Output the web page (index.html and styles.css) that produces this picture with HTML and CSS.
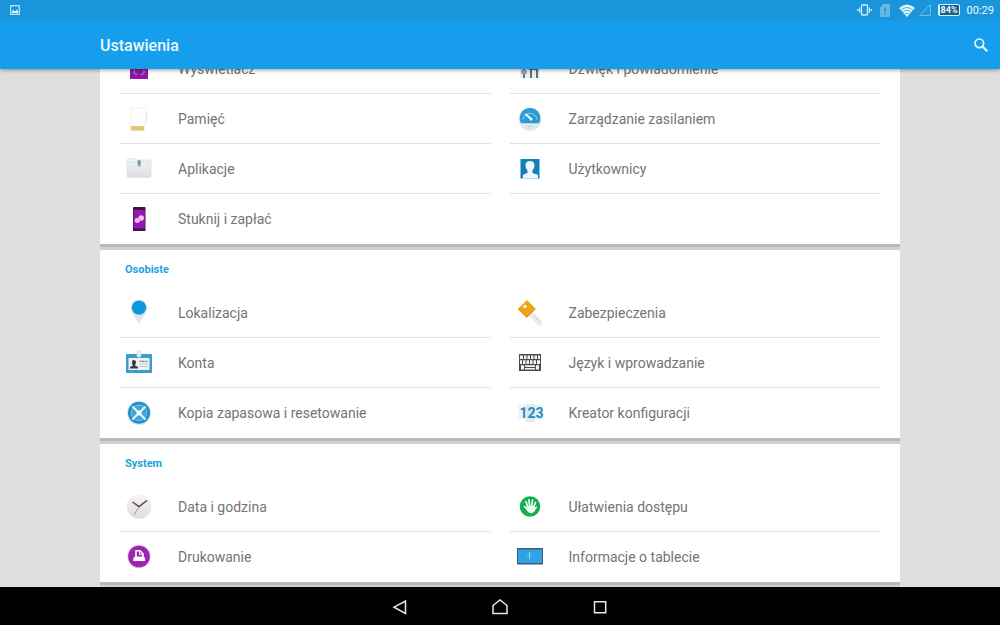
FILE: index.html
```html
<!DOCTYPE html>
<html lang="pl">
<head>
<meta charset="utf-8">
<meta name="viewport" content="width=device-width, initial-scale=1">
<title>Ustawienia</title>
<link rel="stylesheet" href="styles.css">
</head>
<body>
<div class="screen">
  <header class="top">
    <div class="status">
      <svg class="status-pic" width="10" height="10" viewBox="0 0 10 10"><rect x=".7" y=".7" width="8.6" height="8.6" fill="none" stroke="#c4eafa" stroke-width="1.2"/><path d="M2 8V6.500L3.500 5L5 6.500L7 4.500L8 6V8Z" fill="#e2f6fd"/></svg>
      <div class="status-right">
        <svg width="15" height="12" viewBox="0 0 15 12" fill="none" stroke="#c9effb" stroke-width="1.300"><rect x="4.500" y="1" width="6" height="10" rx=".8"/><path d="M2.600 3.500V8.500M12.400 3.500V8.500M.7 5V7M14.300 5V7"/></svg>
        <svg class="sim" width="10" height="13" viewBox="0 0 10 13"><path d="M3.500 0H8.800Q10 0 10 1.200V11.800Q10 13 8.800 13H1.200Q0 13 0 11.800V3.500Z" fill="#62bae9"/><path d="M5 3.500V7.500M5 9V10.500" stroke="#2087c4" stroke-width="1.400"/></svg>
        <svg class="wifi" width="16" height="13" viewBox="0 0 16 13"><path d="M0 4Q8-3.200 16 4L8 13Z" fill="#def7fd"/><path d="M1.800 6.200Q8 .8 14.200 6.200M3.600 8.200Q8 4.500 12.400 8.200M5.400 10.300Q8 8 10.600 10.300" fill="none" stroke="#2a9fde" stroke-width=".8"/></svg>
        <svg width="12" height="12" viewBox="0 0 12 12"><path d="M11.300 .8V11.400H.8Z" fill="none" stroke="#6fc3ee"/></svg>
        <span class="battery">84%</span>
        <time>00:29</time>
      </div>
    </div>
    <div class="appbar">
      <h1>Ustawienia</h1>
      <button class="search" type="button" aria-label="Szukaj"><svg width="16" height="16" viewBox="0 0 16 16" fill="none" stroke="#e6faff"><circle cx="6.300" cy="6.300" r="4.300" stroke-width="1.700"/><path d="M9.500 9.500L14.200 14.200" stroke-width="2.200"/></svg></button>
    </div>
  </header>

  <main class="content">
    <section class="card">
      <ul class="grid">
        <li><a href="#"><svg class="icon" viewBox="0 0 28 28"><rect x="5" y="4" width="18" height="20" fill="#8d16a5"/><path d="M9 15V18Q10 19.500 12 19.500M19 15V18Q18 19.500 16 19.500" fill="none" stroke="#d492df"/></svg>Wyświetlacz</a></li>
        <li><a href="#"><svg class="icon" viewBox="0 0 28 28"><rect x="4" y="4" width="20" height="19" fill="#e9edf0"/><path d="M8 4V23M15 4V23M21 4V23" stroke="#596f82" stroke-width="2"/><circle cx="8" cy="17" r="2.800" fill="#8a9fad"/><rect x="13" y="9" width="9" height="6" fill="#596f82"/></svg>Dźwięk i powiadomienie</a></li>
        <li><a href="#"><svg class="icon" viewBox="0 0 28 28"><path d="M6 2.500H21.500V16L20 19V26H6Z" fill="#fdfdfd" stroke="#f1f1f1"/><path d="M21.500 9V16L19.500 18.500" fill="none" stroke="#e2e2e2"/><path d="M6 21H19V25.500H6Z" fill="#e6cb78"/><path d="M8.500 22V25M11 22V25M13.500 22V25M16 22V25" stroke="#d8b865" stroke-width=".8"/></svg>Pamięć</a></li>
        <li><a href="#"><svg class="icon" viewBox="0 0 28 28"><circle cx="14" cy="14.300" r="11.500" fill="#e5e8ea"/><path d="M5 18.300A10.300 10.300 0 1 1 23 18.300Z" fill="#2b9cd8"/><path d="M6.800 14.500A7.300 7.300 0 0 1 21.200 14.500" fill="none" stroke="#90cfee"/><path d="M9.500 9L15 14" stroke="#fff" stroke-width="1.800"/><circle cx="15" cy="14" r="1.500" fill="#fff"/><path d="M11 21.500H17" stroke="#c9cccd"/></svg>Zarządzanie zasilaniem</a></li>
        <li><a href="#"><svg class="icon" viewBox="0 0 28 28"><defs><linearGradient id="folder" x2="0" y2="1"><stop stop-color="#f5f5f6"/><stop offset="1" stop-color="#dcdddf"/></linearGradient></defs><path d="M2 5Q2 3.500 3.500 3.500H9L11 5H25Q26 5 26 6V21Q26 22.500 24.500 22.500H3.500Q2 22.500 2 21Z" fill="url(#folder)" stroke="#dfe0e2" stroke-width=".8"/><path d="M2.500 7H26" stroke="#dcdee0" stroke-width=".7"/><rect x="12.500" y="5" width="3.400" height="6.500" rx="1" fill="#93b6c9"/><path d="M14.200 6V9" stroke="#416f86"/></svg>Aplikacje</a></li>
        <li><a href="#"><svg class="icon" viewBox="0 0 28 28"><path d="M4.500 4H23.500V23.500H4.500Z" fill="#1280bb"/><path d="M7 23.500V20Q8 18.800 11.500 18V15.500Q9.500 13.500 9.500 10.500Q9.500 6 14 6T18.500 10.500Q18.500 13.500 16.500 15.500V18Q20 18.800 22 20V23.500Z" fill="#f3f7fa"/></svg>Użytkownicy</a></li>
        <li><a href="#"><svg class="icon" viewBox="0 0 28 28"><rect x="8" y="2" width="12.500" height="24" rx=".8" fill="#411248"/><rect x="8.600" y="5" width="11.300" height="18.500" fill="#9418ab"/><circle cx="12.300" cy="15.300" r="2.600" fill="#efb6f3"/><circle cx="16.200" cy="13" r="2.700" fill="#f4caf7"/><path d="M13.500 12.500L15 15.500" stroke="#cf7fd9" stroke-width=".8"/></svg>Stuknij i zapłać</a></li>
      </ul>
    </section>

    <section class="card">
      <h2>Osobiste</h2>
      <ul class="grid">
        <li><a href="#"><svg class="icon" viewBox="0 0 28 28"><path d="M14 1C19 1 22.300 4.500 22.300 9C22.300 14 18 17 14 25C10 17 5.700 14 5.700 9C5.700 4.500 9 1 14 1Z" fill="#e3e6e8"/><circle cx="14" cy="8.600" r="7.200" fill="#0d99df"/></svg>Lokalizacja</a></li>
        <li><a href="#"><svg class="icon" viewBox="0 0 28 28"><path d="M16 13L25 22V25.500H22L13 16Z" fill="#eeeeef" stroke="#dedee0" stroke-width=".8"/><path d="M18 17L24 23" stroke="#d0d1d3"/><path d="M10.500 1.500Q11 1 11.700 1.700L19 9Q19.600 9.500 19 10.200L11.500 18Q11 18.500 10.200 17.900L2.300 10.500Q1.700 10 2.300 9.400Z" fill="#eda51d"/><path d="M2.200 10L11 18.300L19.500 9.700" fill="none" stroke="#d98d12"/><circle cx="9" cy="7.500" r="1.800" fill="#fff3ce"/></svg>Zabezpieczenia</a></li>
        <li><a href="#"><svg class="icon" viewBox="0 0 28 28"><rect x="1" y="5" width="26" height="19" rx=".8" fill="#3e9bc5"/><rect x="3.500" y="9" width="21" height="12" fill="#edf3f6"/><path d="M5 19.500V18L8 16.500Q6.700 14.500 7 12.500T9 11T11 12.500T10 16.500L13 18V19.500Z" fill="#343c42"/><path d="M14.500 12.300H23" stroke="#468dae" stroke-width="1.200" stroke-dasharray="2 .6"/><path d="M14.500 15H23M14.500 17.500H23" stroke="#b9c8d0"/><rect x="12" y="2" width="4" height="6" rx=".8" fill="#eef1f2" stroke="#ccd5d9" stroke-width=".7"/></svg>Konta</a></li>
        <li><a href="#"><svg class="icon" viewBox="0 0 28 28"><rect x="3" y="5" width="22" height="17" fill="#4b4c4f"/><path d="M4 6.500H7V10H4ZM8 6.500H10.500V10H8ZM11.500 6.500H14V10H11.500ZM15 6.500H17.500V10H15ZM18.500 6.500H21V10H18.500ZM22 6.500H24V10H22ZM4 11.200H6V15H4ZM7 11.200H9.500V15H7ZM10.500 11.200H13V15H10.500ZM14 11.200H16.500V15H14ZM17.500 11.200H20V15H17.500ZM21 11.200H24V15H21ZM5 16.300H8V20.500H5ZM9 16.300H19V18H9ZM9 19H19V20.500H9ZM20 16.300H23V20.500H20Z" fill="#f5f5f5"/></svg>Język i wprowadzanie</a></li>
        <li><a href="#"><svg class="icon" viewBox="0 0 28 28"><circle cx="14" cy="14" r="12" fill="#cde9f6"/><circle cx="14" cy="13.800" r="11" fill="#2b8dc3"/><circle cx="14" cy="13.800" r="7.800" fill="#3fa6d9" stroke="#70c2e8"/><path d="M7.500 7.500L20.500 20.500M20.500 7.500L7.500 20.500" stroke="#eff9fd" stroke-width="1.800"/><circle cx="14" cy="14" r="2.500" fill="#fff"/></svg>Kopia zapasowa i resetowanie</a></li>
        <li><a href="#"><svg class="icon" viewBox="0 0 28 28"><rect x="2" y="6" width="8" height="14" fill="#f1f5f8"/><rect x="10" y="5" width="9" height="18" fill="#deebf2"/><rect x="19" y="6" width="8" height="14" fill="#eaf1f5"/><text x="15.500" y="19" class="digits" text-anchor="middle">123</text></svg>Kreator konfiguracji</a></li>
      </ul>
    </section>

    <section class="card">
      <h2>System</h2>
      <ul class="grid">
        <li><a href="#"><svg class="icon" viewBox="0 0 28 28"><defs><linearGradient id="clock" x2="0" y2="1"><stop stop-color="#f6f4f4"/><stop offset="1" stop-color="#dedcdd"/></linearGradient></defs><circle cx="14" cy="13.500" r="12.300" fill="url(#clock)"/><path d="M14 13.500L9 22" stroke="#d58074"/><path d="M7.500 9L14 13.500L22 7.500" fill="none" stroke="#514547" stroke-width="1.500"/></svg>Data i godzina</a></li>
        <li><a href="#"><svg class="icon" viewBox="0 0 28 28"><circle cx="14" cy="13.500" r="10.200" fill="#13ae52"/><path d="M11.700 14L10 8.500M13.500 13L13 6.800M15.700 13L16.500 7.200M17.700 14L19.500 9.500M12 17L8.500 13.500" stroke="#effff4" stroke-width="1.700" stroke-linecap="round"/><path d="M10.800 13H18.500L19.200 14.500L20.500 13.200L21.200 14L18 19Q16.500 20.500 14 20T10.500 16.500Z" fill="#effff4"/></svg>Ułatwienia dostępu</a></li>
        <li><a href="#"><svg class="icon" viewBox="0 0 28 28"><circle cx="14" cy="13.500" r="11.700" fill="#e9c9ef"/><circle cx="14" cy="13.500" r="10.800" fill="#9b27b0"/><path d="M11 14V7.800H15L18 10.800V14" fill="none" stroke="#fff" stroke-width="1.600"/><path d="M14.500 8V11.300H18" fill="none" stroke="#fff"/><path d="M10 13.500H18.500L20 15V18H8.300V15Z" fill="#fff"/></svg>Drukowanie</a></li>
        <li><a href="#"><svg class="icon" viewBox="0 0 28 28"><rect x="1" y="5" width="26" height="16.500" fill="#3c5f78"/><rect x="2" y="6.500" width="24" height="13.500" fill="#30a3e3"/><path d="M13.500 9V15.500" stroke="#a8ddf6"/><path d="M11 12.500H12.500M15 12.500H16" stroke="#74c5ee"/></svg>Informacje o tablecie</a></li>
      </ul>
    </section>
  </main>

  <nav class="navbar" aria-label="Nawigacja">
    <button type="button" aria-label="Wstecz"><svg width="18" height="18" viewBox="0 0 18 18"><path d="M14.500 3V15.500L3 9.200Z"/></svg></button>
    <button type="button" aria-label="Ekran główny"><svg width="18" height="18" viewBox="0 0 18 18"><path d="M2 15.500V7.500L9 2L16 7.500V15.500Z"/></svg></button>
    <button type="button" aria-label="Ostatnie"><svg width="18" height="18" viewBox="0 0 18 18"><path d="M3.500 3.700H14.700V14.700H3.500Z"/></svg></button>
  </nav>
</div>
</body>
</html>
```
FILE: styles.css
```css
* {
  box-sizing: border-box;
}

body {
  margin: 0;
  font-family: Roboto, "Liberation Sans", sans-serif;
  background: #dfdfde;
}

button {
  display: flex;
  align-items: center;
  justify-content: center;
  padding: 0;
  border: 0;
  background: none;
  cursor: pointer;
}

.screen {
  display: flex;
  flex-direction: column;
  height: 100vh;
}

.top {
  z-index: 1;
  color: #e9fbff;
  background: #169deb;
  box-shadow: 0 1px 4px rgba(0, 0, 0, 0.4);
}

.status {
  display: flex;
  align-items: center;
  justify-content: space-between;
  height: 20px;
  padding: 0 6px 0 10px;
  background: #1a95dc;
}

.status-right {
  display: flex;
  align-items: center;
  gap: 7px;
  font-size: 11px;
}

.sim {
  margin: 0 2px 0 1px;
}

.wifi {
  margin-right: -3px;
}

.battery {
  padding: 0 1px;
  border: 1px solid #d9f4fc;
  border-left-width: 2px;
  border-radius: 2px;
  background: #17618f;
  font-size: 9px;
  font-weight: 700;
  line-height: 10px;
}

.appbar {
  display: flex;
  align-items: center;
  justify-content: space-between;
  height: 49px;
  padding: 0 11px 0 10%;
}

.appbar h1 {
  margin: 0;
  padding-top: 2px;
  font-size: 16px;
  font-weight: 500;
}

.content {
  display: flex;
  flex: 1;
  flex-direction: column;
  justify-content: flex-end;
  gap: 6px;
  min-height: 0;
  overflow: hidden;
  padding: 0 10% 5px;
}

.card {
  flex: none;
  padding: 0 19px;
  background: #fff;
  box-shadow: 0 3px 0 #b9b9b8, 0 6px 0 #d0d0cf;
}

.card h2 {
  margin: 0;
  padding: 2px 6px 0;
  color: #1ca4de;
  font-size: 11px;
  font-weight: 700;
  line-height: 36px;
}

.grid {
  display: grid;
  grid-template-columns: 1fr 1fr;
  column-gap: 19px;
  margin: 0;
  padding: 0;
  list-style: none;
}

.grid li {
  height: 50px;
  border-bottom: 1px solid #e3e3e3;
}

.grid li:last-child,
.grid li:nth-last-child(2):nth-child(odd) {
  border-bottom-color: transparent;
}

.grid a {
  display: flex;
  align-items: center;
  gap: 19px;
  height: 100%;
  color: #747474;
  font-size: 14px;
  text-decoration: none;
}

.icon {
  width: 28px;
  height: 28px;
  margin-left: 6px;
  margin-right: 6px;
}

.digits {
  fill: #2689bd;
  font-size: 14px;
  font-weight: 700;
}

.navbar {
  z-index: 1;
  display: flex;
  justify-content: center;
  height: 38px;
  background: #000;
}

.navbar button {
  width: 100px;
  padding-top: 2px;
}

.navbar path {
  fill: none;
  stroke: #e8e8e8;
  stroke-width: 1.5px;
}
```
